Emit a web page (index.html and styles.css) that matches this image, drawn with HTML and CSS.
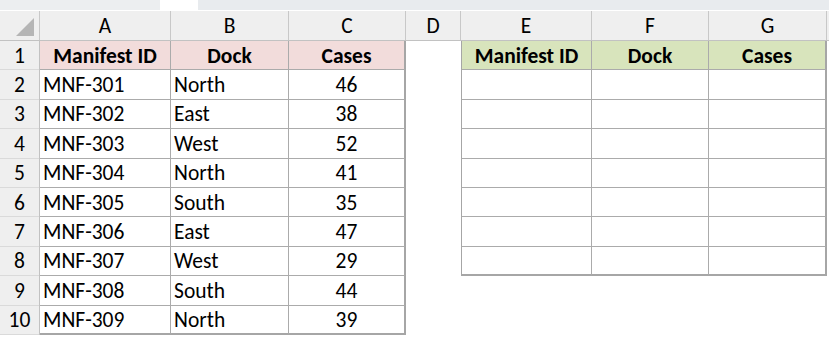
FILE: index.html
```html
<!DOCTYPE html>
<html>
<head>
<meta charset="utf-8">
<link rel="stylesheet" href="styles.css">
</head>
<body>
<div class="strip">
  <div class="strip-seg s1"></div>
  <div class="strip-seg s2"></div>
  <div class="strip-seg s3"></div>
</div>
<div class="colhead">
  <div class="corner">
    <svg width="20" height="20" viewBox="0 0 20 20"><polygon points="19,1 19,19 1,19" fill="#b5b5b5"/></svg>
  </div>
  <div class="ch w-a">A</div>
  <div class="ch w-b">B</div>
  <div class="ch w-c">C</div>
  <div class="ch w-d">D</div>
  <div class="ch w-e">E</div>
  <div class="ch w-f">F</div>
  <div class="ch w-g">G</div>
  <div class="ch w-rest"></div>
</div>
<div class="body">
  <div class="rownums">
    <div class="rn">1</div><div class="rn">2</div><div class="rn">3</div><div class="rn">4</div><div class="rn">5</div>
    <div class="rn">6</div><div class="rn">7</div><div class="rn">8</div><div class="rn">9</div><div class="rn">10</div>
  </div>
  <div class="tbl left">
    <div class="c hd pink l">Manifest ID</div><div class="c hd pink">Dock</div><div class="c hd pink r">Cases</div>
    <div class="c txt l">MNF-301</div><div class="c txt">North</div><div class="c num r">46</div>
    <div class="c txt l">MNF-302</div><div class="c txt">East</div><div class="c num r">38</div>
    <div class="c txt l">MNF-303</div><div class="c txt">West</div><div class="c num r">52</div>
    <div class="c txt l">MNF-304</div><div class="c txt">North</div><div class="c num r">41</div>
    <div class="c txt l">MNF-305</div><div class="c txt">South</div><div class="c num r">35</div>
    <div class="c txt l">MNF-306</div><div class="c txt">East</div><div class="c num r">47</div>
    <div class="c txt l">MNF-307</div><div class="c txt">West</div><div class="c num r">29</div>
    <div class="c txt l">MNF-308</div><div class="c txt">South</div><div class="c num r">44</div>
    <div class="c txt l b">MNF-309</div><div class="c txt b">North</div><div class="c num r b">39</div>
  </div>
  <div class="gapcol"></div>
  <div class="tbl right">
    <div class="c hd green l">Manifest ID</div><div class="c hd green">Dock</div><div class="c hd green r">Cases</div>
    <div class="c l"></div><div class="c"></div><div class="c r"></div>
    <div class="c l"></div><div class="c"></div><div class="c r"></div>
    <div class="c l"></div><div class="c"></div><div class="c r"></div>
    <div class="c l"></div><div class="c"></div><div class="c r"></div>
    <div class="c l"></div><div class="c"></div><div class="c r"></div>
    <div class="c l"></div><div class="c"></div><div class="c r"></div>
    <div class="c l b"></div><div class="c b"></div><div class="c r b"></div>
  </div>
</div>
</body>
</html>
```

FILE: styles.css
```css
html, body {
  margin: 0;
  padding: 0;
  background: #ffffff;
  width: 829px;
  height: 337px;
  overflow: hidden;
  font-family: "Calibri", "Carlito", "Lato", sans-serif;
  color: #000;
}

.strip {
  height: 11px;
  display: flex;
  background: #ffffff;
}
.strip-seg {
  height: 10px;
  background: #e8ebee;
}
.s1 { width: 160px; background: #eceef0; }
.s2 { width: 38px; background: #ffffff; }
.s3 { flex: 1; }

.colhead {
  display: flex;
  height: 29px;
  background: #efefef;
  border-bottom: 1px solid #c2c2c2;
}
.corner {
  width: 40px;
  border-right: 1px solid #c8c8c8;
  display: flex;
  align-items: center;
  justify-content: flex-end;
  padding-right: 4px;
  box-sizing: border-box;
  padding-top: 3px;
}
.ch {
  box-sizing: border-box;
  border-right: 1px solid #c8c8c8;
  display: flex;
  align-items: center;
  justify-content: center;
  font-size: 21.5px;
  padding-top: 1px;
}
.w-a { width: 131px; }
.w-b { width: 118px; }
.w-c { width: 117px; }
.w-d { width: 55px; }
.w-e { width: 131px; }
.w-f { width: 117px; }
.w-g { width: 118px; }
.w-rest { flex: 1; border-right: none; }

.body {
  display: flex;
  align-items: flex-start;
}

.rownums {
  width: 40px;
  box-sizing: border-box;
  background: #efefef;
  border-right: 1px solid #c2c2c2;
  display: grid;
  grid-template-rows: repeat(10, 29.4px);
}
.rn {
  display: flex;
  align-items: center;
  justify-content: center;
  font-size: 21.5px;
  border-bottom: 1px solid #dadada;
  padding-top: 1px;
}

.tbl {
  display: grid;
  grid-template-rows: repeat(10, 29.4px);
}
.left {
  grid-template-columns: 131px 118px 117px;
}
.right {
  grid-template-columns: 131px 117px 118px;
  grid-template-rows: repeat(8, 29.4px);
}
.gapcol {
  width: 55px;
}

.c {
  box-sizing: border-box;
  border-right: 1px solid #ababab;
  border-bottom: 1px solid #ababab;
  display: flex;
  align-items: center;
  font-size: 21.5px;
  padding-top: 1px;
  white-space: nowrap;
}
.c.l { border-left: 1px solid #a6a6a6; }
.left .c.l { border-left: none; }
.c.r { border-right: 2px solid #a6a6a6; }
.c.b { border-bottom: 2px solid #a6a6a6; }

.hd {
  font-weight: 700;
  justify-content: center;
}
.pink { background: #f2dcdb; }
.green { background: #d8e4bc; }
.txt { padding-left: 3px; }
.num { justify-content: center; }
```
